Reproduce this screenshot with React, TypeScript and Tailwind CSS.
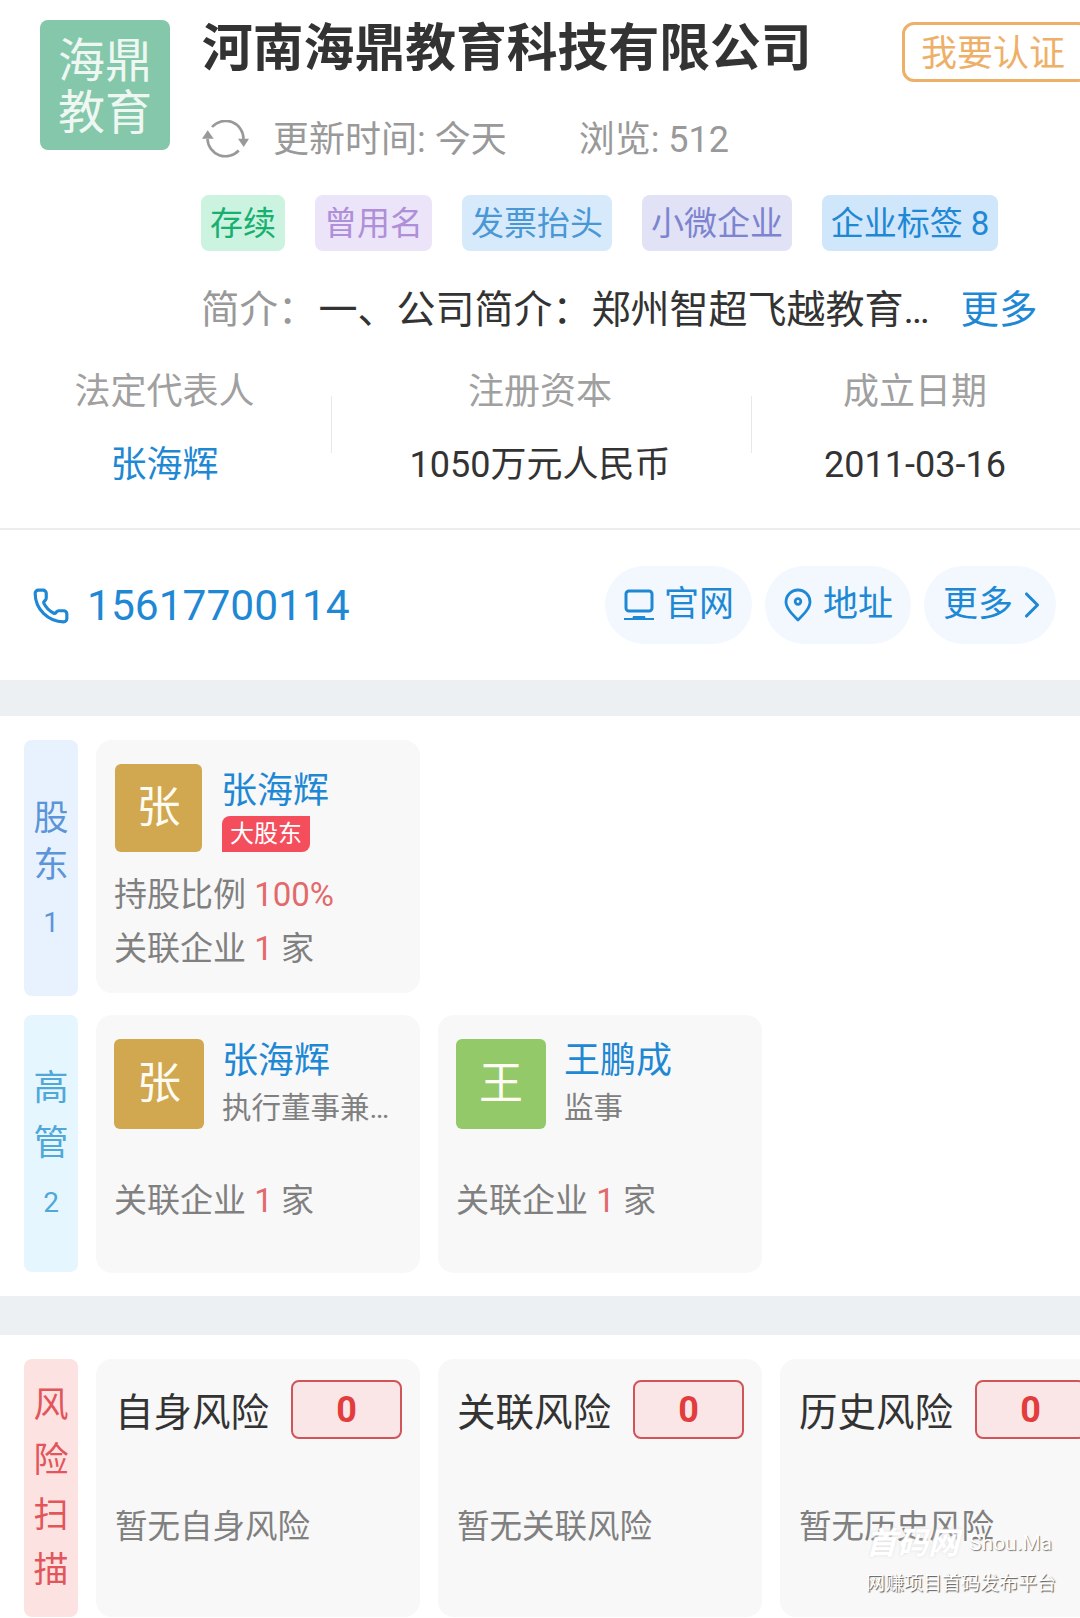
import { Phone, ChevronRight } from "lucide-react";

const font = "font-['Roboto','Noto_Sans_CJK_SC',sans-serif]";

const RefreshIcon = () => (
  <svg width="48" height="40" viewBox="0 0 48 40" fill="none" stroke="#999" strokeWidth="2.6">
    <path d="M10 7 A18 18 0 0 1 41.5 19" />
    <path d="M36.7 30.5 A18 18 0 0 1 5.5 19" />
    <path d="M36 18.7 L47 18.7 L41.7 27 Z" fill="#999" stroke="none" />
    <path d="M0 18.7 L11.7 18.7 L5.7 10.3 Z" fill="#999" stroke="none" />
  </svg>
);

const MonitorIcon = () => (
  <svg width="32" height="32" viewBox="0 0 32 32" fill="none" stroke="#1f88d4" strokeWidth="3">
    <rect x="3" y="2" width="26" height="20" rx="3" />
    <path d="M1 30 L31 30" strokeWidth="2" />
    <path d="M10 27 L22 27 L23 31 L9 31 Z" fill="#1f88d4" stroke="none" />
  </svg>
);

const PinIcon = () => (
  <svg width="28" height="34" viewBox="0 0 28 34" fill="none" stroke="#1f88d4" strokeWidth="2.8">
    <path d="M14 32 C8 26 2 20 2 14 A12 12 0 0 1 26 14 C26 20 20 26 14 32 Z" strokeLinejoin="round" />
    <circle cx="14" cy="13.5" r="2.8" />
  </svg>
);

const Tag = ({ text, className }: { text: string; className: string }) => (
  <div className={`h-[56px] flex items-center justify-center rounded-lg text-[33px] leading-none whitespace-nowrap ${className}`}>
    {text}
  </div>
);

const Pill = ({ className, children }: { className: string; children: React.ReactNode }) => (
  <div className={`h-[78px] rounded-[39px] bg-[#f2f8fe] flex items-center text-[35px] text-[#1f88d4] whitespace-nowrap ${className}`}>
    {children}
  </div>
);

const SideLabel = ({ chars, count, className, step, countH }: { chars: string[]; count?: string; className: string; step: string; countH?: string }) => (
  <div className={`w-[54px] shrink-0 rounded-lg flex flex-col items-center justify-center text-[35px] leading-none ${className}`}>
    {chars.map((c) => (
      <span key={c} className={`flex items-center ${step}`}>{c}</span>
    ))}
    {count && <span className={`flex items-center text-[28px] ${countH}`}>{count}</span>}
  </div>
);

const Linked = () => (
  <div className="text-[33px] leading-none text-[#808080] whitespace-nowrap">
    关联企业 <span className="text-[#e36a6a]">1</span> 家
  </div>
);

const Avatar = ({ text, className }: { text: string; className: string }) => (
  <div className={`shrink-0 rounded-md flex items-center justify-center text-[44px] text-[#fdfbf2] ${className}`}>
    {text}
  </div>
);

const Stat = ({ label, value, color, className }: { label: string; value: string; color: string; className: string }) => (
  <div className={`text-center ${className}`}>
    <div className="text-[36px] leading-none text-[#a0a0a0]">{label}</div>
    <div className={`mt-[37px] text-[36px] leading-none whitespace-nowrap ${color}`}>{value}</div>
  </div>
);

const PersonCard = ({ name, role, initial, color }: { name: string; role: string; initial: string; color: string }) => (
  <div className="w-[324px] h-[258px] rounded-2xl bg-[#f8f8f8] pl-[18px] pt-[24px]">
    <div className="flex">
      <Avatar text={initial} className={`w-[90px] h-[90px] ${color}`} />
      <div className="ml-[18px] min-w-0">
        <div className="text-[36px] leading-none text-[#1f88d4] mt-[4px]">{name}</div>
        <div className="mt-[11px] text-[29.5px] leading-[36px] text-[#808080] whitespace-nowrap">{role}</div>
      </div>
    </div>
    <div className="mt-[55px]">
      <Linked />
    </div>
  </div>
);

const RiskCard = ({ title, empty }: { title: string; empty: string }) => (
  <div className="w-[324px] shrink-0 h-[258px] rounded-2xl bg-[#f8f8f8] pl-[19px] pr-[18px] pt-[21px]">
    <div className="flex items-center justify-between h-[59px]">
      <span className="text-[38.5px] pt-[8px] text-[#333] leading-none whitespace-nowrap">{title}</span>
      <div className="w-[111px] h-[59px] rounded-lg border-2 border-[#cf5558] bg-[#fae6e6] flex items-center justify-center text-[36px] font-bold text-[#e23c3c]">
        0
      </div>
    </div>
    <div className="mt-[72px] text-[32.5px] leading-none text-[#808080] whitespace-nowrap">{empty}</div>
  </div>
);

export default function App() {
  return (
    <div className={`relative w-[1080px] h-[1618px] overflow-hidden bg-white ${font}`}>
      {/* Header */}
      <div className="h-[530px] border-b-2 border-[#ececec] pt-[20px]">
        <div className="flex">
          <div className="ml-[40px] w-[130px] h-[130px] shrink-0 rounded-lg bg-[#84c7aa] text-[#eef7f2] text-[47px] leading-[52px] pt-[4px] flex items-center justify-center text-center">
            海鼎<br />教育
          </div>
          <div className="ml-[32px] flex-1 min-w-0">
            <div className="flex items-start justify-between">
              <h1 className="text-[50.8px] font-bold leading-[56px] mt-[1px] text-[#333] whitespace-nowrap">河南海鼎教育科技有限公司</h1>
              <div className="-mr-[10px] mt-[2px] w-[188px] h-[60px] shrink-0 rounded-[12px] border-[3px] border-[#eeb068] text-[#eeb068] text-[36px] leading-none flex items-center pl-[16px] pt-[3px] whitespace-nowrap">
                我要认证
              </div>
            </div>
            <div className="mt-[38px] flex items-center text-[#999] text-[36px] leading-none">
              <RefreshIcon />
              <span className="ml-[23px]">更新时间: 今天</span>
              <span className="ml-[72px]">浏览: 512</span>
            </div>
          </div>
        </div>
        <div className="ml-[201px] mt-[35px] flex gap-[30px]">
          <Tag text="存续" className="w-[84px] bg-[#ccf2e0] text-[#16b070]" />
          <Tag text="曾用名" className="w-[117px] bg-[#ece4f8] text-[#ae8fd8]" />
          <Tag text="发票抬头" className="w-[150px] bg-[#d6eafb] text-[#4a97d6]" />
          <Tag text="小微企业" className="w-[150px] bg-[#e1e2f5] text-[#7d84cf]" />
          <Tag text="企业标签 8" className="w-[176px] bg-[#cfe6fb] text-[#1f88d4]" />
        </div>
        <div className="ml-[201px] mt-[40px] flex items-center text-[38.5px] leading-none whitespace-nowrap">
          <span className="text-[#999]">{"简介\uFF1A"}</span>
          <span className="ml-[2px] w-[642px] text-[39px] text-[#333]">{"一、公司简介\uFF1A郑州智超飞越教育…"}</span>
          <span className="text-[#1f88d4]">更多</span>
        </div>
        <div className="mt-[44px] flex items-start">
          <Stat label="法定代表人" value="张海辉" color="text-[#1f88d4]" className="w-[329px]" />
          <div className="w-px h-[57px] mt-[22px] ml-[2px] shrink-0 bg-[#e8e8e8]" />
          <Stat label="注册资本" value="1050万元人民币" color="text-[#333]" className="w-[416px]" />
          <div className="w-px h-[57px] mt-[22px] ml-[3px] shrink-0 bg-[#e8e8e8]" />
          <Stat label="成立日期" value="2011-03-16" color="text-[#333]" className="w-[326px]" />
        </div>
      </div>

      {/* Contact */}
      <div className="h-[150px] flex items-start pl-[32px] pr-[24px] pt-[36px]">
        <div className="flex items-center h-[80px] text-[#1f88d4]">
          <Phone size={38} strokeWidth={2} className="scale-x-[-1] rotate-90" />
          <span className="ml-[17px] text-[42.5px] leading-none">15617700114</span>
        </div>
        <div className="ml-auto flex gap-[13px]">
          <Pill className="w-[147px] pl-[18px] gap-[9px]">
            <MonitorIcon />
            官网
          </Pill>
          <Pill className="w-[146px] pl-[19px] gap-[11px]">
            <PinIcon />
            地址
          </Pill>
          <Pill className="w-[132px] pl-[19px]">
            更多
            <ChevronRight size={44} strokeWidth={1.7} className="shrink-0 -ml-[3px]" />
          </Pill>
        </div>
      </div>
      <div className="h-[36px] bg-[#edf0f3]" />

      {/* People */}
      <div className="pl-[24px] pt-[24px] flex gap-[18px] h-[299px]">
        <SideLabel chars={["股", "东"]} count="1" step="h-[47px]" countH="h-[69px]" className="h-[256px] pt-[16px] bg-[#e8f2fe] text-[#5b95d8]" />
        <div className="w-[324px] h-[253px] rounded-2xl bg-[#f8f8f8] pl-[18px] pt-[24px]">
          <div className="flex">
            <Avatar text="张" className="ml-[1px] w-[87px] h-[88px] bg-[#d1a74f]" />
            <div className="ml-[19px]">
              <div className="text-[36px] leading-none text-[#1f88d4] mt-[9px]">张海辉</div>
              <div className="mt-[7px] ml-[1px] w-[88px] h-[36px] bg-[#f44d5c] text-white text-[24px] leading-none flex items-center justify-center rounded-tl-lg rounded-br-lg">
                大股东
              </div>
            </div>
          </div>
          <div className="mt-[26px] text-[33px] leading-none text-[#808080] whitespace-nowrap">
            持股比例 <span className="text-[#e36a6a]">100%</span>
          </div>
          <div className="mt-[21px]">
            <Linked />
          </div>
        </div>
      </div>
      <div className="pl-[24px] flex gap-[18px] h-[281px]">
        <SideLabel chars={["高", "管"]} count="2" step="h-[55px]" countH="h-[63px]" className="h-[257px] pt-[8px] bg-[#e6f6fe] text-[#4fa8d8]" />
        <div className="flex gap-[18px]">
          <PersonCard name="张海辉" role="执行董事兼…" initial="张" color="bg-[#d1a74f]" />
          <PersonCard name="王鹏成" role="监事" initial="王" color="bg-[#93c968]" />
        </div>
      </div>
      <div className="h-[39px] bg-[#edf0f3]" />

      {/* Risk scan */}
      <div className="pl-[24px] pt-[24px] flex gap-[18px]">
        <SideLabel chars={["风", "险", "扫", "描"]} step="h-[55px]" className="h-[258px] bg-[#fde2e2] text-[#e2555a]" />
        <div className="flex gap-[18px]">
          <RiskCard title="自身风险" empty="暂无自身风险" />
          <RiskCard title="关联风险" empty="暂无关联风险" />
          <RiskCard title="历史风险" empty="暂无历史风险" />
        </div>
      </div>

      {/* Watermark */}
      <div className="absolute left-[866px] top-[1528px] w-[186px] text-white">
        <div className="flex items-center justify-between">
          <span className="text-[31px] leading-none italic font-bold [text-shadow:0_0_3px_#ddd]">首码网</span>
          <span className="text-[21px] leading-none [text-shadow:1px_1px_1px_#777]">Shou.Ma</span>
        </div>
        <div className="mt-[15px] text-[19px] leading-none whitespace-nowrap [text-shadow:1px_1px_1px_#555]">网赚项目首码发布平台</div>
      </div>
    </div>
  );
}
